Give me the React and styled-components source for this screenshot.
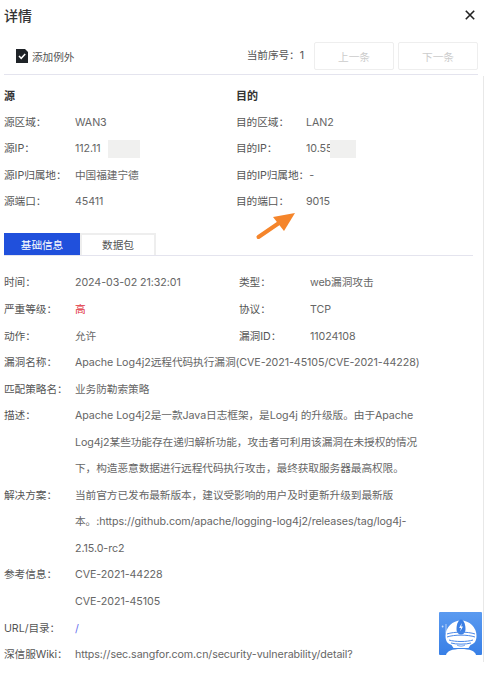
import React from "react";
import styled, { createGlobalStyle } from "styled-components";

const GlobalStyle = createGlobalStyle`
  html, body {
    margin: 0;
    padding: 0;
    background: #fff;
  }
  body {
    font-family: Inter, "Noto Sans CJK SC", sans-serif;
    font-size: 10.7px;
    letter-spacing: -0.08px;
    color: #666;
  }
`;

const Drawer = styled.div`
  position: relative;
  width: 486px;
  height: 675px;
  overflow: hidden;
`;

const ScrollTrack = styled.div`
  position: absolute;
  left: 483px;
  top: 76px;
  width: 1px;
  height: 586px;
  background: #e8e8e8;
`;

const Header = styled.div`
  display: flex;
  align-items: center;
  justify-content: space-between;
  height: 30px;
  padding: 0 11px 0 4px;
`;

const Title = styled.h2`
  margin: 0;
  font-size: 14px;
  font-weight: 500;
  color: #333;
`;

const Toolbar = styled.div`
  display: flex;
  align-items: flex-start;
  height: 32px;
  margin: 12px 8px 0 4px;
  padding-left: 12px;
  border-bottom: 1px solid #e4e4ee;
`;

const AddException = styled.div`
  display: flex;
  align-items: center;
  gap: 4px;
  height: 28px;
  color: #555;
`;

const Sequence = styled.div`
  margin-left: auto;
  margin-right: 10px;
  line-height: 28px;
  color: #555;
`;

const PageButton = styled.button`
  width: 80px;
  height: 28px;
  margin-left: ${(p) => (p.$next ? "4px" : "0")};
  padding: 0;
  border: 1px solid #eee;
  border-radius: 2px;
  background: #fff;
  color: #ccc;
  font: inherit;
`;

const Columns = styled.div`
  display: grid;
  grid-template-columns: 232px 1fr;
  padding: 8px 4px 0;
`;

const SectionTitle = styled.div`
  height: 26.75px;
  line-height: 26.75px;
  font-size: 11px;
  font-weight: 700;
  color: #333;
`;

const Row = styled.div`
  display: flex;
  align-items: ${(p) => (p.$top ? "flex-start" : "center")};
  min-height: 26.55px;
`;

const Label = styled.div`
  flex: none;
  min-width: ${(p) => (p.$narrow ? "70px" : "71px")};
  line-height: 26.55px;
  color: #555;
  white-space: nowrap;
`;

const Value = styled.div`
  line-height: 26.55px;
  color: ${(p) => (p.$red ? "#e0303a" : p.$link ? "#6670ee" : "#666")};
  white-space: nowrap;
`;

const Masked = styled.span`
  display: inline-block;
  width: ${(p) => p.$w}px;
  height: 18px;
  margin-left: ${(p) => p.$offset}px;
  background: #f0f0ef;
  vertical-align: middle;
`;

const Tabs = styled.div`
  display: flex;
  margin: 17.25px 13px 0 4px;
  border-bottom: 1px solid #e4e4ee;
`;

const Tab = styled.div`
  box-sizing: border-box;
  width: 76px;
  height: 22px;
  line-height: 21px;
  text-align: center;
  background: ${(p) => (p.$active ? "#2050dc" : "#fff")};
  color: ${(p) => (p.$active ? "#fff" : "#555")};
  border: 2px solid ${(p) => (p.$active ? "#2050dc" : "#eee")};
  border-bottom: 0;
`;

const Details = styled.div`
  padding: 14.25px 4px 0;
`;

const InfoGrid = styled.div`
  display: grid;
  grid-template-columns: 235px 1fr;
`;

const Paragraph = styled.div`
  line-height: 26.55px;
  white-space: nowrap;
`;

const ArrowSvg = styled.svg`
  position: absolute;
  left: 250px;
  top: 208px;
`;

const Assistant = styled.svg`
  position: absolute;
  left: 439px;
  top: 612px;
`;

const CloseButton = styled.svg`
  display: block;
`;

function FileCheckIcon() {
  return (
    <svg width="12" height="14" viewBox="0 0 12 14">
      <path d="M0 0h9l3 3v11H0z" fill="#1f2328" />
      <path d="M3 7l2.2 2.3L9.2 5" fill="none" stroke="#fff" strokeWidth="1.5" />
    </svg>
  );
}

function CloseIcon() {
  return (
    <CloseButton width="10" height="10" viewBox="0 0 10 10">
      <path d="M.8.8l8.4 8.4M9.2.8L.8 9.2" stroke="#222" strokeWidth="1.6" />
    </CloseButton>
  );
}

function OrangeArrow() {
  return (
    <ArrowSvg width="50" height="36" viewBox="0 0 50 36">
      <path d="M8.5 29L29 15" stroke="#f5852b" strokeWidth="4" strokeLinecap="round" />
      <path d="M45 5L23 9l11 14z" fill="#f5852b" />
    </ArrowSvg>
  );
}

function AssistantLogo() {
  return (
    <Assistant width="43" height="43" viewBox="0 0 43 43">
      <defs>
        <linearGradient id="bg" x1="0" y1="0" x2="0" y2="1">
          <stop offset="0" stopColor="#5a9af0" />
          <stop offset="1" stopColor="#387fe6" />
        </linearGradient>
      </defs>
      <rect width="43" height="43" rx="1" fill="url(#bg)" />
      <path d="M7 12v9" stroke="#cfe0fa" strokeWidth="0.8" />
      <circle cx="3.6" cy="14.5" r="0.9" fill="#cfe0fa" />
      <path d="M6.5 24a15.5 15.5 0 0 1 31 0c0 6-3 8-6 9l-2 3H14.5l-2-3c-3-1-6-3-6-9z" fill="#fff" />
      <path d="M17.5 17c0-5 2-9.500 4.500-9.500s4.500 4.500 4.500 9.500c0 3.500-2 5.500-4.500 5.500s-4.500-2-4.500-5.500z" fill="#3b7fe4" />
      <path d="M22.800 11l-2.600 5h1.800l-.8 3.500 2.800-5h-1.800z" fill="#fff" />
      <path d="M8 22c7-2.500 21-2.500 28 0M8 25c7-2.500 21-2.500 28 0M10 28c6 2 18 2 24 0M12 31c5 1.500 15 1.500 20 0" stroke="#4a88e8" strokeWidth="1" fill="none" />
      <path d="M18 33c2 1.500 6 1.500 8 0" stroke="#4a88e8" strokeWidth="0.8" fill="none" />
      <path d="M7 43c1-4 6-6 15-6s14 2 15 6z" fill="#fff" />
    </Assistant>
  );
}

const rowsLeft = [
  ["源区域：", "WAN3"],
  ["源IP：", <>112.11<Masked $w={32} $offset={7} /></>],
  ["源IP归属地：", "中国福建宁德"],
  ["源端口：", "45411"],
];

const rowsRight = [
  ["目的区域：", "LAN2"],
  ["目的IP：", <>10.55<Masked $w={26} $offset={-2} /></>],
  ["目的IP归属地：", "-"],
  ["目的端口：", "9015"],
];

export default function App() {
  return (
    <Drawer>
      <GlobalStyle />
      <ScrollTrack />
      <Header>
        <Title>详情</Title>
        <CloseIcon />
      </Header>
      <Toolbar>
        <AddException>
          <FileCheckIcon />
          添加例外
        </AddException>
        <Sequence>当前序号：1</Sequence>
        <PageButton>上一条</PageButton>
        <PageButton $next>下一条</PageButton>
      </Toolbar>
      <Columns>
        <div>
          <SectionTitle>源</SectionTitle>
          {rowsLeft.map(([k, v]) => (
            <Row key={k}><Label>{k}</Label><Value>{v}</Value></Row>
          ))}
        </div>
        <div>
          <SectionTitle>目的</SectionTitle>
          {rowsRight.map(([k, v]) => (
            <Row key={k}><Label $narrow>{k}</Label><Value>{v}</Value></Row>
          ))}
        </div>
      </Columns>
      <OrangeArrow />
      <Tabs>
        <Tab $active>基础信息</Tab>
        <Tab>数据包</Tab>
      </Tabs>
      <Details>
        <InfoGrid>
          <Row><Label>时间：</Label><Value>2024-03-02 21:32:01</Value></Row>
          <Row><Label>类型：</Label><Value>web漏洞攻击</Value></Row>
          <Row><Label>严重等级：</Label><Value $red>高</Value></Row>
          <Row><Label>协议：</Label><Value>TCP</Value></Row>
          <Row><Label>动作：</Label><Value>允许</Value></Row>
          <Row><Label>漏洞ID：</Label><Value>11024108</Value></Row>
        </InfoGrid>
        <Row><Label>漏洞名称：</Label><Value>Apache Log4j2远程代码执行漏洞(CVE-2021-45105/CVE-2021-44228)</Value></Row>
        <Row><Label>匹配策略名：</Label><Value>业务防勒索策略</Value></Row>
        <Row $top>
          <Label>描述：</Label>
          <Paragraph>
            Apache Log4j2是一款Java日志框架，是Log4j 的升级版。由于Apache<br />
            Log4j2某些功能存在递归解析功能，攻击者可利用该漏洞在未授权的情况<br />
            下，构造恶意数据进行远程代码执行攻击，最终获取服务器最高权限。
          </Paragraph>
        </Row>
        <Row $top>
          <Label>解决方案：</Label>
          <Paragraph>
            当前官方已发布最新版本，建议受影响的用户及时更新升级到最新版<br />
            本。:https://github.com/apache/logging-log4j2/releases/tag/log4j-<br />
            2.15.0-rc2
          </Paragraph>
        </Row>
        <Row $top>
          <Label>参考信息：</Label>
          <Paragraph>
            CVE-2021-44228<br />
            CVE-2021-45105
          </Paragraph>
        </Row>
        <Row><Label>URL/目录：</Label><Value $link>/</Value></Row>
        <Row><Label>深信服Wiki：</Label><Value>https://sec.sangfor.com.cn/security-vulnerability/detail?</Value></Row>
      </Details>
      <AssistantLogo />
    </Drawer>
  );
}
